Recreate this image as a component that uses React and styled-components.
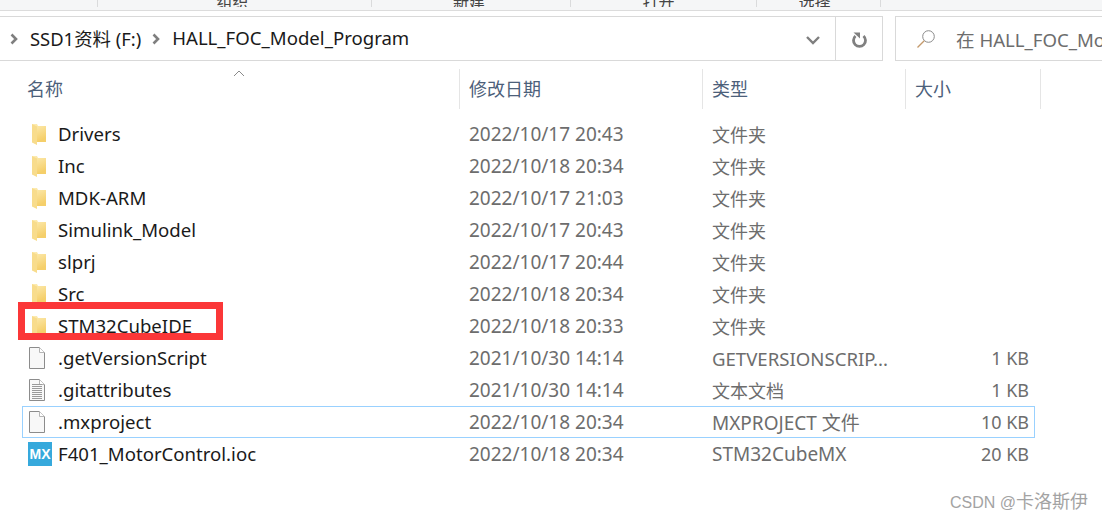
import styled, { createGlobalStyle } from "styled-components";

const GlobalStyle = createGlobalStyle`
  html, body {
    margin: 0;
    padding: 0;
    background: white;
  }
`;

const FONT = `"Noto Sans", "Noto Sans CJK SC", sans-serif`;

const Page = styled.div`
  position: relative;
  width: 1102px;
  height: 520px;
  overflow: hidden;
  background: white;
  font-family: ${FONT};
  font-size: 18px;
`;

const Ribbon = styled.div`
  height: 10px;
  background: #f5f6f7;
  border-bottom: 1px solid #dcdcdc;
  display: flex;
  overflow: hidden;
`;

const RibbonGroup = styled.div`
  width: ${(props) => props.$width}px;
  height: 7px;
  flex: none;
  box-sizing: border-box;
  border-right: 1px solid #dadbdc;
  font-size: 16px;
  line-height: 16px;
  color: #444;
  overflow: hidden;
  display: flex;
  align-items: flex-end;
  justify-content: center;
`;

const RibbonLabel = styled.span`
  margin-bottom: -3px;
  margin-right: ${(props) => props.$shift * 2}px;
  white-space: nowrap;
`;

const AddressRow = styled.div`
  display: flex;
  margin-top: 5px;
  height: 45px;
`;

const AddressBar = styled.div`
  width: 883px;
  flex: none;
  box-sizing: border-box;
  border: 1px solid #d9d9d9;
  border-width: 1px 1px 1px 0;
  display: flex;
  align-items: center;
`;

const Crumbs = styled.div`
  flex: 1;
  display: flex;
  align-items: center;
  padding-left: 9px;
  color: #1a1a1a;
`;

const Crumb = styled.span`
  margin: 0 ${(props) => props.$gap}px 2px 11px;
  font-size: ${(props) => props.$size}px;
  white-space: nowrap;
`;

const Dropdown = styled.div`
  width: 46px;
  padding: 3px 0 0 2px;
  box-sizing: border-box;
  display: flex;
  justify-content: center;
`;

const Refresh = styled.div`
  width: 46px;
  height: 100%;
  border-left: 1px solid #d9d9d9;
  display: flex;
  align-items: center;
  justify-content: center;
`;

const SearchBox = styled.div`
  margin-left: 12px;
  flex: 1;
  min-width: 0;
  border: 1px solid #d9d9d9;
  border-right: none;
  display: flex;
  align-items: center;
  padding-left: 20px;
  color: #6d6d6d;
  font-size: 18.6px;
  white-space: nowrap;
  overflow: hidden;
`;

const SearchIcon = styled.svg`
  flex: none;
`;

const SearchText = styled.span`
  margin-left: 20px;
`;

const HeaderRow = styled.div`
  position: relative;
  display: grid;
  grid-template-columns: 460px 243px 203px 135px;
  height: 39px;
  margin-top: 8px;
`;

const HeaderCell = styled.div`
  box-sizing: border-box;
  padding-left: ${(props) => props.$pad}px;
  border-right: 1px solid #e5e5e5;
  color: #4c607a;
  line-height: 40px;
`;

const SortArrow = styled.svg`
  position: absolute;
  left: 233px;
  top: 1px;
`;

const FileList = styled.div`
  margin: 10px 67px 0 22px;
`;

const Row = styled.div`
  box-sizing: border-box;
  height: 32px;
  display: grid;
  grid-template-columns: 446px 243px 1fr auto;
  align-items: center;
  padding-right: 5px;
  color: #6d6d6d;
  border: 1px solid ${(props) => (props.$selected ? "#99d1ff" : "transparent")};
`;

const NameCell = styled.div`
  display: flex;
  align-items: center;
  color: #1a1a1a;
  font-size: 18.6px;
  white-space: nowrap;
`;

const NameText = styled.span`
  margin-bottom: 2px;
`;

const DateCell = styled.div`
  font-size: 19px;
`;

const TypeCell = styled.div`
  font-size: ${(props) => props.$size}px;
`;

const IconSlot = styled.div`
  width: 35px;
  height: 24px;
  flex: none;
  display: flex;
  align-items: center;
  padding-left: 5px;
  box-sizing: border-box;
`;

const MxBadge = styled.div`
  width: 24px;
  height: 24px;
  background: #36a9dc;
  color: white;
  font-family: "Liberation Sans", sans-serif;
  font-weight: 700;
  font-size: 14px;
  line-height: 24px;
  text-align: center;
`;

const Highlight = styled.div`
  position: absolute;
  left: 18px;
  top: 302px;
  width: 205px;
  height: 38px;
  box-sizing: border-box;
  border: 7px solid #fb3738;
`;

const Watermark = styled.div`
  position: absolute;
  left: 950px;
  top: 490px;
  font-family: "Liberation Sans", "Noto Sans CJK SC", sans-serif;
  font-size: 16px;
  line-height: 24px;
  color: #a3a3a3;
  white-space: nowrap;
`;

const WatermarkName = styled.span`
  font-size: 18px;
`;

function Chevron() {
  return (
    <svg width="10" height="12" viewBox="0 0 10 12">
      <path d="M2.5 1.5 L7 6 L2.5 10.5" fill="none" stroke="#7f7f7f" strokeWidth="2.6" />
    </svg>
  );
}

function FolderIcon() {
  return (
    <svg width="18" height="24" viewBox="0 0 18 24">
      <defs>
        <linearGradient id="fold" x1="0" y1="0" x2="0.4" y2="1">
          <stop offset="0" stopColor="#fdeeb8" />
          <stop offset="1" stopColor="#f5cf6a" />
        </linearGradient>
      </defs>
      <path d="M4 2 H9 L10 4 H18 V20 H4 Z" fill="url(#fold)" />
      <path d="M4 2 L9 4.5 V23 L4 20.5 Z" fill="#f8dc8c" />
    </svg>
  );
}

function FileIcon({ lines }) {
  return (
    <svg width="18" height="24" viewBox="0 0 18 24">
      <path
        d="M1.5 1.5 H11.5 L16.5 6.5 V22.5 H1.5 Z"
        fill="#f8f8f8"
        stroke="#8c8c8c"
      />
      <path d="M11.5 1.5 V6.5 H16.5" fill="#fff" stroke="#b5b5b5" />
      {lines &&
        [6, 8, 10, 12, 14, 16, 18, 20].map((y) => (
          <path key={y} d={`M4 ${y + 0.5} H14`} stroke="#9a9a9a" />
        ))}
    </svg>
  );
}

const files = [
  { name: "Drivers", date: "2022/10/17 20:43", type: "文件夹", icon: "folder" },
  { name: "Inc", date: "2022/10/18 20:34", type: "文件夹", icon: "folder" },
  { name: "MDK-ARM", date: "2022/10/17 21:03", type: "文件夹", icon: "folder" },
  { name: "Simulink_Model", date: "2022/10/17 20:43", type: "文件夹", icon: "folder" },
  { name: "slprj", date: "2022/10/17 20:44", type: "文件夹", icon: "folder" },
  { name: "Src", date: "2022/10/18 20:34", type: "文件夹", icon: "folder" },
  { name: "STM32CubeIDE", date: "2022/10/18 20:33", type: "文件夹", icon: "folder" },
  { name: ".getVersionScript", date: "2021/10/30 14:14", type: "GETVERSIONSCRIP...", typeSize: 18.6, size: "1 KB", icon: "file" },
  { name: ".gitattributes", date: "2021/10/30 14:14", type: "文本文档", size: "1 KB", icon: "text" },
  { name: ".mxproject", date: "2022/10/18 20:34", type: "MXPROJECT 文件", typeSize: 19, size: "10 KB", icon: "file", selected: true },
  { name: "F401_MotorControl.ioc", date: "2022/10/18 20:34", type: "STM32CubeMX", typeSize: 19, size: "20 KB", icon: "mx" },
];

function RowIcon({ kind }) {
  if (kind === "folder") return <FolderIcon />;
  if (kind === "mx") return <MxBadge>MX</MxBadge>;
  return <FileIcon lines={kind === "text"} />;
}

export default function App() {
  return (
    <Page>
      <GlobalStyle />
      <Ribbon>
        <RibbonGroup $width={98} />
        <RibbonGroup $width={274}>
          <RibbonLabel $shift={2}>组织</RibbonLabel>
        </RibbonGroup>
        <RibbonGroup $width={199}>
          <RibbonLabel $shift={2}>新建</RibbonLabel>
        </RibbonGroup>
        <RibbonGroup $width={186}>
          <RibbonLabel $shift={5}>打开</RibbonLabel>
        </RibbonGroup>
        <RibbonGroup $width={124}>
          <RibbonLabel $shift={4}>选择</RibbonLabel>
        </RibbonGroup>
      </Ribbon>
      <AddressRow>
        <AddressBar>
          <Crumbs>
            <Chevron />
            <Crumb $size={18.4} $gap={10}>SSD1资料 (F:)</Crumb>
            <Chevron />
            <Crumb $size={18.6} $gap={0}>HALL_FOC_Model_Program</Crumb>
          </Crumbs>
          <Dropdown>
            <svg width="16" height="10" viewBox="0 0 16 10">
              <path d="M2 2 L8 8 L14 2" fill="none" stroke="#7f7f7f" strokeWidth="2.4" />
            </svg>
          </Dropdown>
          <Refresh>
            <svg width="18" height="18" viewBox="0 0 18 18">
              <path
                d="M13.5 6 A6 6 0 1 1 5.5 6"
                fill="none"
                stroke="#808080"
                strokeWidth="2.8"
              />
              <path d="M3.5 2.5 H10 V8.5 Z" fill="#808080" />
            </svg>
          </Refresh>
        </AddressBar>
        <SearchBox>
          <SearchIcon width="20" height="20" viewBox="0 0 20 20">
            <circle cx="12.5" cy="7.5" r="5.8" fill="none" stroke="#8a8a8a" />
            <path d="M8.2 11.8 L1.5 18.5" stroke="#c49a6c" strokeWidth="1.3" />
          </SearchIcon>
          <SearchText>在 HALL_FOC_Model_Program</SearchText>
        </SearchBox>
      </AddressRow>
      <HeaderRow>
        <HeaderCell $pad={27}>名称</HeaderCell>
        <HeaderCell $pad={9}>修改日期</HeaderCell>
        <HeaderCell $pad={9}>类型</HeaderCell>
        <HeaderCell $pad={9}>大小</HeaderCell>
        <SortArrow width="12" height="7" viewBox="0 0 12 7">
          <path d="M1 6 L6 1 L11 6" fill="none" stroke="#8a8a8a" />
        </SortArrow>
      </HeaderRow>
      <FileList>
        {files.map((file) => (
          <Row key={file.name} $selected={file.selected}>
            <NameCell>
              <IconSlot>
                <RowIcon kind={file.icon} />
              </IconSlot>
              <NameText>{file.name}</NameText>
            </NameCell>
            <DateCell>{file.date}</DateCell>
            <TypeCell $size={file.typeSize || 18}>{file.type}</TypeCell>
            <div>{file.size}</div>
          </Row>
        ))}
      </FileList>
      <Highlight />
      <Watermark>
        CSDN @<WatermarkName>卡洛斯伊</WatermarkName>
      </Watermark>
    </Page>
  );
}
